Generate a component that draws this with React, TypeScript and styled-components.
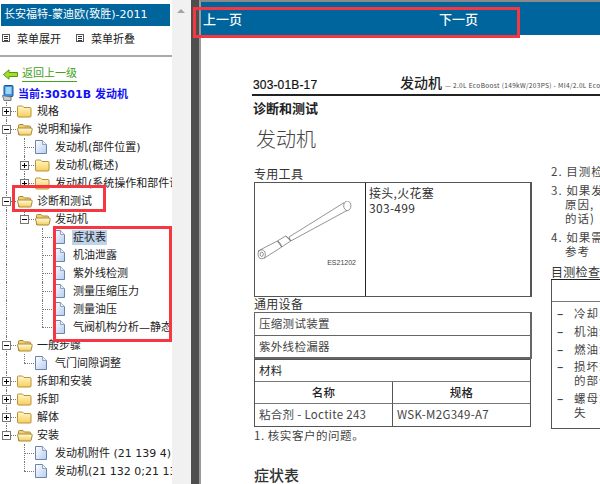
import React from "react";
import styled, { createGlobalStyle } from "styled-components";

const Global = createGlobalStyle`
  html, body { margin: 0; padding: 0; background: #fff; }
  body { width: 600px; height: 484px; overflow: hidden; font-family: "DejaVu Sans", "Noto Sans CJK SC", sans-serif; }
  * { box-sizing: border-box; }
`;

const Frame = styled.div`
  position: relative; width: 600px; height: 484px; display: flex; overflow: hidden; background: #fff;
`;
const Side = styled.aside`
  width: 172px; flex: none; height: 484px; overflow: hidden; padding-top: 4px; background: #fff;
`;
const TitleBar = styled.div`
  margin-left: 1px; width: 169px; height: 22px; background: #00659c; color: #fff;
  font-size: 11px; line-height: 22px; padding-left: 3px; white-space: nowrap;
`;
const MenuBar = styled.div`
  display: flex; height: 31px; align-items: center; padding: 0 0 5px 2px; border-bottom: 2px solid #aaa;
  font-size: 11px; color: #222; margin-bottom: 8px;
`;
const MenuItem = styled.div`
  display: flex; align-items: center; gap: 7px; width: 74px; height: 20px; white-space: nowrap;
`;
const BackRow = styled.div`
  display: flex; align-items: center; height: 18px; padding-left: 3px; gap: 4px;
`;
const BackLink = styled.span`
  font-size: 11px; line-height: 14px; color: #41a317; border-bottom: 1px solid #41a317;
`;
const CurrentRow = styled.div`
  display: flex; align-items: center; height: 19px; padding-left: 2px; gap: 4px; white-space: nowrap;
  font-size: 11px; font-weight: 700; color: #1410f5;
`;
const Tree = styled.div`
  margin-left: -3px; white-space: nowrap;
`;
const Row = styled.div`
  display: flex; align-items: center; height: 18px;
`;
const Guide = styled.span<{ $kind: string }>`
  position: relative; flex: none; width: 18px; height: 18px;
  &::before {
    content: ""; position: absolute; left: 8.5px; width: 0; border-left: 1px dotted #777;
    display: ${p => (p.$kind === "blank" ? "none" : "block")};
    top: 0; height: ${p => (p.$kind === "elbow" ? "9px" : "18px")};
  }
  &::after {
    content: ""; position: absolute; left: 9px; top: 9px; width: 10px; border-top: 1px dotted #777;
    display: ${p => (p.$kind === "tee" || p.$kind === "elbow" ? "block" : "none")};
  }
`;
const Toggle = styled.span`
  position: absolute; z-index: 1; left: 5px; top: 5px; width: 9px; height: 9px; background: #fff;
  border: 1px solid #777; color: #000; font-size: 0;
  &::before { content: ""; position: absolute; left: 1px; top: 3px; width: 5px; height: 1px; background: #000; }
`;
const Plus = styled(Toggle)`
  &::after { content: ""; position: absolute; left: 3px; top: 1px; width: 1px; height: 5px; background: #000; }
`;
const IconSlot = styled.span`
  flex: none; width: 18px; height: 18px; padding-left: 2px; display: flex; align-items: center; justify-content: flex-start;
`;
const Label = styled.span<{ $selected?: boolean }>`
  margin-left: 3px; padding: 0 1px; font-size: 11px; line-height: 15px; color: #222;
  background: ${p => (p.$selected ? "#c0d3ec" : "transparent")};
`;

const Scrollbar = styled.div`
  width: 19px; flex: none; height: 484px; background: #f1f1f1; padding: 9px 0 0 5px;
`;
const ArrowUp = styled.div`
  width: 0; height: 0; border-left: 4px solid transparent; border-right: 4px solid transparent; border-bottom: 4px solid #a5a5a5;
`;
const Splitter = styled.div`
  width: 8px; flex: none; height: 484px; background: #4e4e4e;
`;
const Main = styled.main`
  flex: 1; min-width: 0; height: 484px; overflow: hidden; background: #fff; border-left: 2px solid #999; border-top: 2px solid #8a8a8a;
`;
const NavBar = styled.nav`
  height: 33px; background: #00659c; display: flex; align-items: center; color: #fff; font-size: 13px; font-weight: 500;
  font-family: "Noto Sans CJK SC", sans-serif; padding: 0 0 1px 2px;
`;
const NavPrev = styled.span`width: 236px;`;
const NavNext = styled.span``;

const Page = styled.div`
  width: 399px; padding-left: 51px; overflow: hidden; color: #222; font-family: "Noto Sans CJK SC", sans-serif;
`;
const DocHead = styled.div`
  display: flex; align-items: flex-end; white-space: nowrap; height: 26px; margin-top: 35px; padding-left: 1px;
  border-bottom: 2px solid #222; width: 500px; padding-bottom: 2px;
`;
const DocCode = styled.span`
  font-family: "Liberation Sans", sans-serif; font-size: 12px; font-weight: 400; color: #111; width: 147px; letter-spacing: .15px; -webkit-text-stroke: .2px #111;
`;
const DocTitle = styled.span`font-size: 14px; line-height: 20px; font-weight: 500; color: #222;`;
const DocSub = styled.span`font-size: 6.5px; margin-left: 3px; color: #444; letter-spacing: .35px; line-height: 14px;`;
const SectionHead = styled.div`
  font-size: 13px; line-height: 18px; font-weight: 700; margin-top: 3px; padding-left: 1px; color: #222;
`;
const BigTitle = styled.div`
  font-size: 20px; line-height: 28px; margin-top: 8px; padding-left: 4px; color: #444; font-weight: 300;
`;
const Columns = styled.div`
  display: flex; margin-top: 9px; width: 500px; gap: 19px; padding-left: 2px;
`;
const LeftCol = styled.div`width: 278px; flex: none; padding-top: 5px;`;
const RightCol = styled.div`flex: none; width: 200px; padding-top: 2px; white-space: nowrap;`;
const Caption = styled.div`
  font-size: 12px; line-height: 14px; margin-bottom: 1px; letter-spacing: .3px; color: #333; height: 14px;
`;
const ToolBox = styled.div`
  display: flex; height: 115px; border: 1px solid #555; border-width: 1px 2px 1px 1px;
`;
const ToolPicture = styled.div`
  position: relative; width: 111px; border-right: 1px solid #222; flex: none; padding: 18px 0 0 2px;
`;
const PictureTag = styled.span`
  position: absolute; right: 9px; top: 76px; font-size: 7px; font-family: "Liberation Sans", sans-serif; color: #444;
`;
const ToolText = styled.div`
  padding: 2px 0 0 3px; font-size: 12px; line-height: 15px; letter-spacing: .3px; color: #333;
`;
const Plain = styled.div`
  border: 1px solid #666; border-bottom-width: 2px; border-right-width: 2px;
`;
const PlainRow = styled.div`
  height: 22px; padding-left: 4px; font-size: 11.5px; line-height: 21px; letter-spacing: .3px; color: #444;
  & + & { border-top: 1px solid #666; }
`;
const MatGrid = styled.div`
  display: grid; grid-template-columns: 138px 1fr; width: 277px; border: 1px solid #555; font-size: 11.5px;
`;
const MatCell = styled.div<{ $span?: boolean; $head?: boolean }>`
  height: 22px; line-height: 21px; padding-left: ${p => (p.$head ? 0 : 4)}px; letter-spacing: .3px; white-space: nowrap;
  grid-column: ${p => (p.$span ? "1 / 3" : "auto")};
  text-align: ${p => (p.$head ? "center" : "left")};
  font-weight: ${p => (p.$head ? 500 : 400)}; color: ${p => (p.$head || p.$span ? "#222" : "#444")};
  border-bottom: 1px solid #777;
  &:nth-last-child(-n+2) { border-bottom: 0; }
  &:nth-child(even) { border-right: 1px solid #555; }
`;
const Note = styled.div`
  font-size: 11.5px; line-height: 16px; letter-spacing: .55px; color: #444;
`;
const Subhead = styled.div`
  font-size: 15px; line-height: 20px; margin-top: 22px; color: #333; font-weight: 500;
`;
const StepList = styled.div`display: flex; flex-direction: column; gap: 5px;`;
const Step = styled.div`
  font-size: 11.5px; line-height: 14px; letter-spacing: 1px; color: #444; padding-left: 14px; text-indent: -14px; white-space: pre-line;
`;
const CheckHead = styled.div`
  font-size: 12px; line-height: 14px; margin-top: 7px; letter-spacing: .3px; color: #333; border-bottom: 1px solid #222; height: 15px;
`;
const CheckBox = styled.div`
  height: 149px; border: 1px solid #555; border-top: 0; padding-top: 26px; position: relative;
  &::before { content: ""; position: absolute; left: 0; right: 0; top: 21px; border-top: 1px solid #777; }
`;
const CheckItem = styled.div`
  display: flex; font-size: 11.5px; line-height: 14px; letter-spacing: 1px; color: #444; margin-bottom: 3.8px; padding-left: 5px;
`;
const Dash = styled.span`width: 17px; flex: none; font-weight: 700;`;

const Annotation = styled.div<{ $x: number; $y: number; $w: number; $h: number }>`
  position: absolute; left: ${p => p.$x}px; top: ${p => p.$y}px; width: ${p => p.$w}px; height: ${p => p.$h}px;
  border: 3px solid #f63640; pointer-events: none; z-index: 5;
`;

const MenuIcon = () => (
  <svg width="8" height="8" viewBox="0 0 8 8" shapeRendering="crispEdges">
    <rect x=".5" y=".5" width="7" height="7" fill="#fff" stroke="#555" />
    <path d="M2 2.5h4M2 4.5h4M2 6h4" stroke="#333" />
  </svg>
);
const FolderClosed = () => (
  <svg width="15" height="13" viewBox="0 0 15 13">
    <defs><linearGradient id="fc" x1="0" y1="0" x2="0" y2="1"><stop offset="0" stopColor="#fff6c8" /><stop offset="1" stopColor="#f7cf5c" /></linearGradient></defs>
    <path d="M.5 3V2q0-1 1-1h4l1.5 1.5h6q1 0 1 1v7.500q0 1-1 1h-11q-1.500 0-1.500-1z" fill="url(#fc)" stroke="#b8933a" />
  </svg>
);
const FolderOpen = () => (
  <svg width="16" height="13" viewBox="0 0 16 13">
    <defs><linearGradient id="fo" x1="0" y1="0" x2="0" y2="1"><stop offset="0" stopColor="#fffbe0" /><stop offset="1" stopColor="#f4cc5a" /></linearGradient></defs>
    <path d="M1.500 12V2.500q0-1 1-1h3.500l1.500 1.500h5q1 0 1 1v1.500" fill="#f0cf6e" stroke="#a98a35" />
    <path d="M.5 6q0-1 1-1h12.500q1.500 0 1.200 1.500l-1 4.500q-.3 1-1.200 1h-11z" fill="url(#fo)" stroke="#a98a35" />
  </svg>
);
const DocIcon = () => (
  <svg width="12" height="14" viewBox="0 0 12 14">
    <defs><linearGradient id="dc" x1="0" y1="0" x2="1" y2="1"><stop offset="0" stopColor="#fff" /><stop offset="1" stopColor="#b6cdf0" /></linearGradient></defs>
    <path d="M.5.5h7l4 4v9h-11z" fill="url(#dc)" stroke="#6c83ad" />
    <path d="M7.500.5v4h4" fill="#e8effa" stroke="#8ea3c6" />
  </svg>
);
const BackIcon = () => (
  <svg width="15" height="11" viewBox="0 0 15 11">
    <path d="M.5 5.500 6 .8v2.700h8.500v4H6v2.700z" fill="#a6dd2c" stroke="#4f9a12" />
  </svg>
);
const PcIcon = () => (
  <svg width="12" height="16" viewBox="0 0 12 16">
    <rect x="2" y=".5" width="9" height="11" rx="1" fill="#3d8fe0" stroke="#19568f" />
    <rect x="3.500" y="2" width="6" height="7" fill="#9fd6f7" />
    <path d="M.5 10.500 9 12v3.500H2z" fill="#c9ccd2" stroke="#777" />
  </svg>
);
const Wrench = () => (
  <svg width="96" height="62" viewBox="0 0 96 62" fill="#fff" stroke="#666" strokeWidth=".7">
    <path d="M32 36 87 1.700 90.300 9.300 33.700 40z" />
    <ellipse cx="90.300" cy="4.800" rx="3.600" ry="4.800" />
    <path d="M20.300 40 28.700 35 33.700 40 24.700 46z" />
    <path d="M1 50 20.300 40 24.700 46 7 57.300z" />
    <ellipse cx="4.700" cy="53.300" rx="3.600" ry="4.400" />
    <ellipse cx="4.700" cy="53.300" rx="1.600" ry="2.200" />
    <path d="M21 40q3 2 3.700 6M28.700 35q3.500 2 5 5" fill="none" />
  </svg>
);

type GuideKind = "blank" | "line" | "tee" | "elbow";
type RowData = {
  label: string;
  guides: GuideKind[];
  toggle?: "+" | "-";
  icon: "open" | "closed" | "doc";
  selected?: boolean;
};

const rows: RowData[] = [
  { label: "规格", guides: ["tee"], toggle: "+", icon: "closed" },
  { label: "说明和操作", guides: ["tee"], toggle: "-", icon: "open" },
  { label: "发动机(部件位置)", guides: ["line", "tee"], icon: "doc" },
  { label: "发动机(概述)", guides: ["line", "tee"], toggle: "+", icon: "closed" },
  { label: "发动机(系统操作和部件说明)", guides: ["line", "elbow"], toggle: "+", icon: "closed" },
  { label: "诊断和测试", guides: ["tee"], toggle: "-", icon: "open" },
  { label: "发动机", guides: ["line", "elbow"], toggle: "-", icon: "open" },
  { label: "症状表", guides: ["line", "blank", "tee"], icon: "doc", selected: true },
  { label: "机油泄露", guides: ["line", "blank", "tee"], icon: "doc" },
  { label: "紫外线检测", guides: ["line", "blank", "tee"], icon: "doc" },
  { label: "测量压缩压力", guides: ["line", "blank", "tee"], icon: "doc" },
  { label: "测量油压", guides: ["line", "blank", "tee"], icon: "doc" },
  { label: "气阀机构分析—静态", guides: ["line", "blank", "elbow"], icon: "doc" },
  { label: "一般步骤", guides: ["tee"], toggle: "-", icon: "open" },
  { label: "气门间隙调整", guides: ["line", "elbow"], icon: "doc" },
  { label: "拆卸和安装", guides: ["tee"], toggle: "+", icon: "closed" },
  { label: "拆卸", guides: ["tee"], toggle: "+", icon: "closed" },
  { label: "解体", guides: ["tee"], toggle: "+", icon: "closed" },
  { label: "安装", guides: ["elbow"], toggle: "-", icon: "open" },
  { label: "发动机附件 (21 139 4)", guides: ["blank", "tee"], icon: "doc" },
  { label: "发动机(21 132 0;21 134 0)", guides: ["blank", "elbow"], icon: "doc" },
];

const icons = { open: <FolderOpen />, closed: <FolderClosed />, doc: <DocIcon /> };

export default function App() {
  return (
    <Frame>
      <Global />
      <Side>
        <TitleBar>长安福特-蒙迪欧(致胜)-2011</TitleBar>
        <MenuBar>
          <MenuItem><MenuIcon />菜单展开</MenuItem>
          <MenuItem><MenuIcon />菜单折叠</MenuItem>
        </MenuBar>
        <BackRow><BackIcon /><BackLink>返回上一级</BackLink></BackRow>
        <CurrentRow><PcIcon />当前:30301B 发动机</CurrentRow>
        <Tree>
          {rows.map(r => (
            <Row key={r.label}>
              {r.guides.map((g, i) => (
                <Guide key={i} $kind={g}>
                  {i === r.guides.length - 1 && r.toggle === "+" && <Plus />}
                  {i === r.guides.length - 1 && r.toggle === "-" && <Toggle />}
                </Guide>
              ))}
              <IconSlot>{icons[r.icon]}</IconSlot>
              <Label $selected={r.selected}>{r.label}</Label>
            </Row>
          ))}
        </Tree>
      </Side>
      <Scrollbar><ArrowUp /></Scrollbar>
      <Splitter />
      <Main>
        <NavBar><NavPrev>上一页</NavPrev><NavNext>下一页</NavNext></NavBar>
        <Page>
          <DocHead>
            <DocCode>303-01B-17</DocCode>
            <DocTitle>发动机</DocTitle>
            <DocSub>— 2.0L EcoBoost (149kW/203PS) - MI4/2.0L EcoBoost (162kW/220PS)</DocSub>
          </DocHead>
          <SectionHead>诊断和测试</SectionHead>
          <BigTitle>发动机</BigTitle>
          <Columns>
            <LeftCol>
              <Caption>专用工具</Caption>
              <ToolBox>
                <ToolPicture><Wrench /><PictureTag>ES21202</PictureTag></ToolPicture>
                <ToolText>接头,火花塞<br />303-499</ToolText>
              </ToolBox>
              <Caption>通用设备</Caption>
              <Plain>
                <PlainRow>压缩测试装置</PlainRow>
                <PlainRow>紫外线检漏器</PlainRow>
              </Plain>
              <MatGrid>
                <MatCell $span>材料</MatCell>
                <MatCell $head>名称</MatCell>
                <MatCell $head>规格</MatCell>
                <MatCell>粘合剂 - Loctite 243</MatCell>
                <MatCell>WSK-M2G349-A7</MatCell>
              </MatGrid>
              <Note>1. 核实客户的问题。</Note>
              <Subhead>症状表</Subhead>
            </LeftCol>
            <RightCol>
              <StepList>
                <Step>2. 目测检查</Step>
                <Step>{"3. 如果发现\n原因,\n的话)"}</Step>
                <Step>{"4. 如果需要\n参考"}</Step>
              </StepList>
              <CheckHead>目测检查表</CheckHead>
              <CheckBox>
                <CheckItem><Dash>–</Dash>冷却系统</CheckItem>
                <CheckItem><Dash>–</Dash>机油泄漏</CheckItem>
                <CheckItem><Dash>–</Dash>燃油泄漏</CheckItem>
                <CheckItem><Dash>–</Dash><span>损坏或<br />的部件</span></CheckItem>
                <CheckItem><Dash>–</Dash><span>螺母或<br />失</span></CheckItem>
              </CheckBox>
            </RightCol>
          </Columns>
        </Page>
      </Main>
      <Annotation $x={193} $y={7} $w={327} $h={31} />
      <Annotation $x={12} $y={185} $w={94} $h={27} />
      <Annotation $x={53} $y={226} $w={119} $h={116} />
    </Frame>
  );
}
